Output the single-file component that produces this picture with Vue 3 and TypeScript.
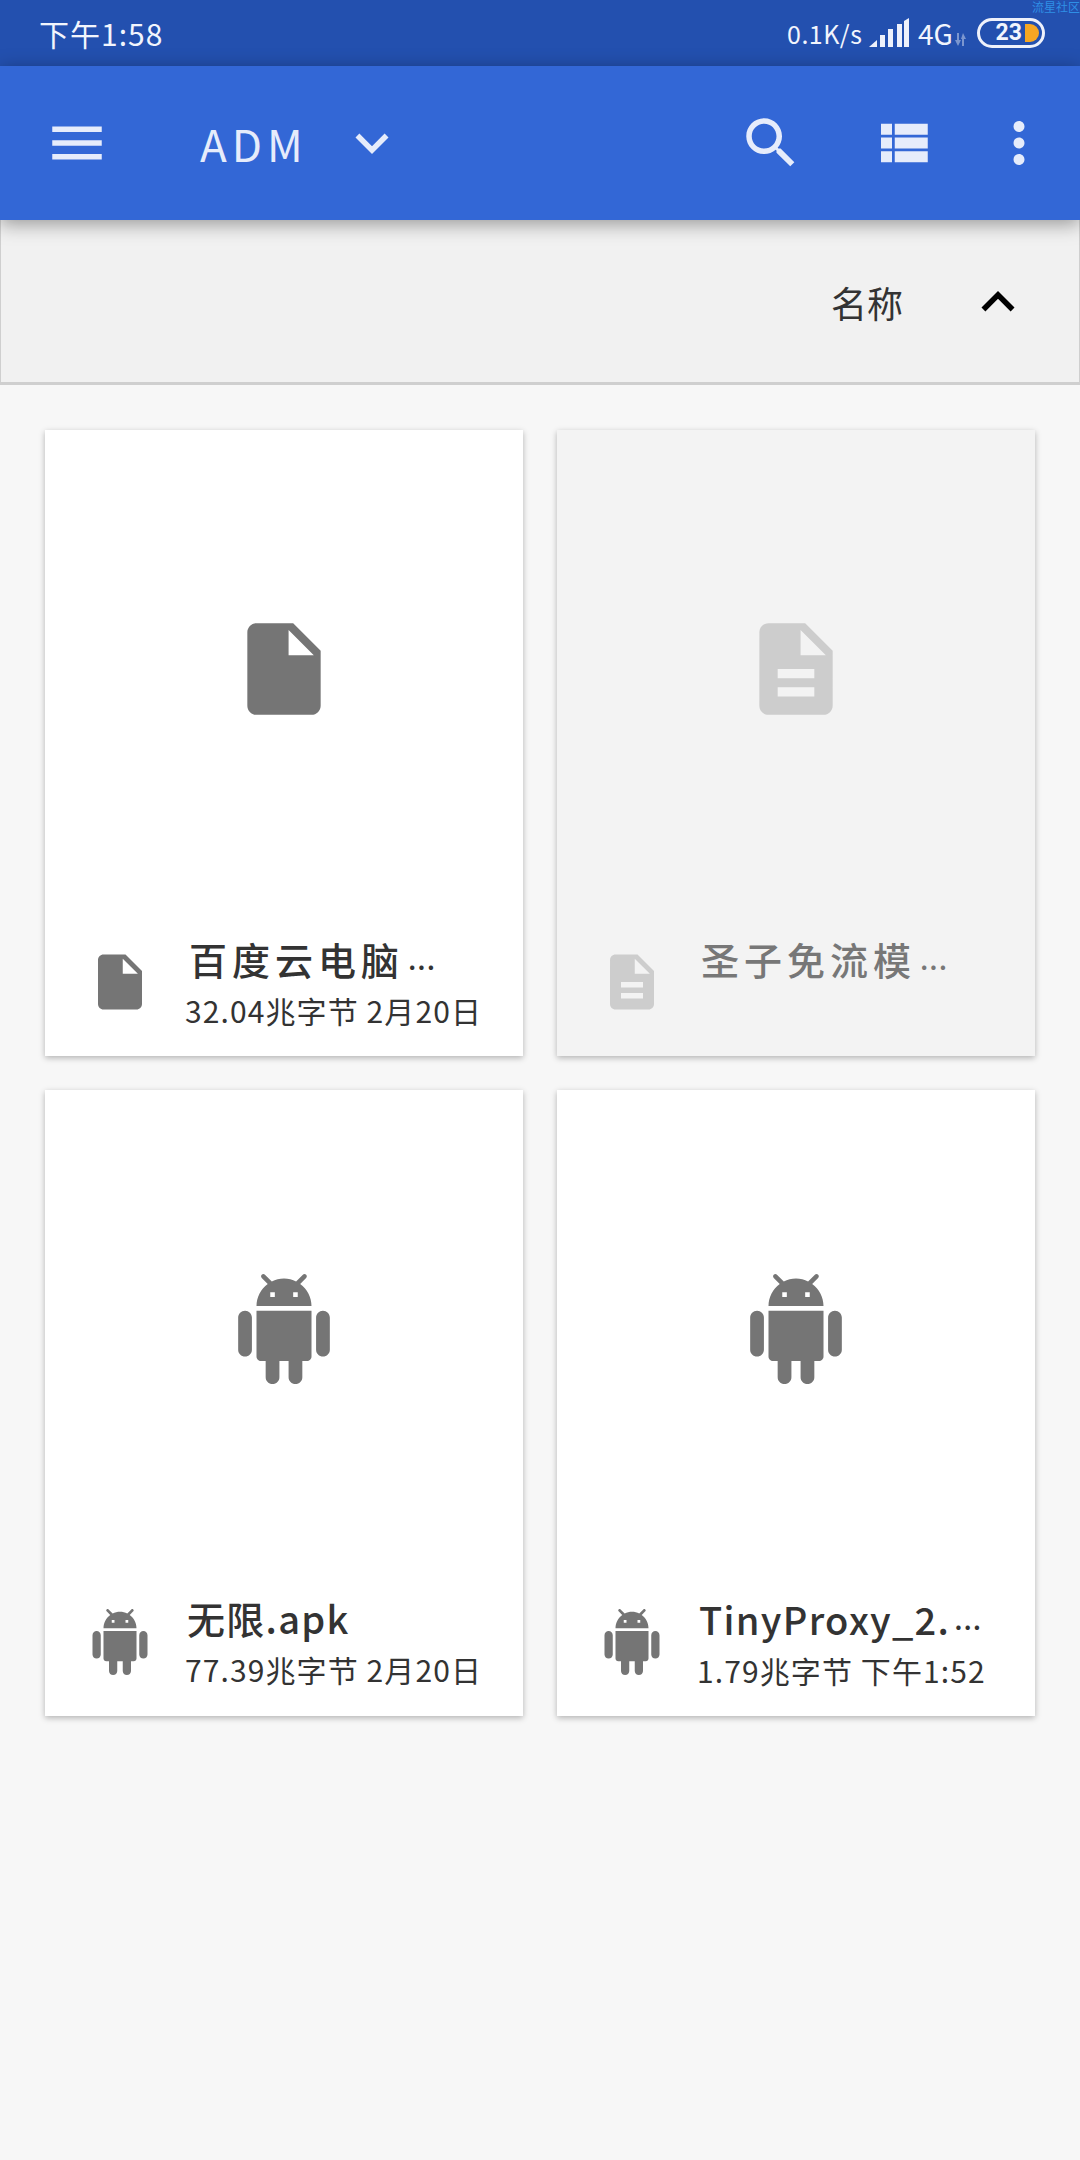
<script setup lang="ts">
type IconName = 'file' | 'doc' | 'android'

interface FileItem {
  name: string
  meta?: string
  icon: IconName
  faded?: boolean
  cut?: boolean
  latin?: boolean
}

const icons: Record<IconName, string> = {
  file: 'M14 2H6c-1.1 0-2 .9-2 2v16c0 1.1.9 2 2 2h12c1.1 0 2-.9 2-2V8l-6-6zm-1 7V3.5L18.5 9H13z',
  doc: 'M14 2H6c-1.1 0-1.99.9-1.99 2L4 20c0 1.1.89 2 1.99 2H18c1.1 0 2-.9 2-2V8l-6-6zm2 16H8v-2h8v2zm0-4H8v-2h8v2zm-3-5V3.5L18.5 9H13z',
  android:
    'M6 18c0 .55.45 1 1 1h1v3.5c0 .83.67 1.5 1.5 1.5s1.5-.67 1.5-1.5V19h2v3.5c0 .83.67 1.5 1.5 1.5s1.5-.67 1.5-1.5V19h1c.55 0 1-.45 1-1V8H6v10zM3.5 8C2.67 8 2 8.67 2 9.5v7c0 .83.67 1.5 1.5 1.5S5 17.33 5 16.5v-7C5 8.67 4.33 8 3.5 8zm17 0c-.83 0-1.5.67-1.5 1.5v7c0 .83.67 1.5 1.5 1.5s1.5-.67 1.5-1.5v-7c0-.83-.67-1.5-1.5-1.5zm-4.97-5.84l1.3-1.3c.2-.2.2-.51 0-.71-.2-.2-.51-.2-.71 0l-1.48 1.48C13.85 1.23 12.95 1 12 1c-.96 0-1.86.23-2.66.63L7.85.15c-.2-.2-.51-.2-.71 0-.2.2-.2.51 0 .71l1.31 1.31C6.97 3.26 6 5.01 6 7h12c0-1.99-.97-3.75-2.47-4.84zM10 5H9V4h1v1zm5 0h-1V4h1v1z',
}

const files: FileItem[] = [
  { name: '百度云电脑', meta: '32.04兆字节 2月20日', icon: 'file', cut: true },
  { name: '圣子免流模', icon: 'doc', faded: true, cut: true },
  { name: '无限.apk', meta: '77.39兆字节 2月20日', icon: 'android', latin: true },
  { name: 'TinyProxy_2.', meta: '1.79兆字节 下午1:52', icon: 'android', cut: true, latin: true },
]
</script>

<template>
  <div class="page">
    <div class="status-bar">
      <span class="clock">下午1:58</span>
      <span class="watermark">流星社区</span>
      <div class="status-right">
        <span class="speed">0.1K/s</span>
        <svg class="signal" width="40" height="29" viewBox="0 0 40 29">
          <polygon points="0,29 8,22 8,29" />
          <rect x="11" y="17" width="5" height="12" />
          <rect x="19" y="11" width="5" height="18" />
          <rect x="28" y="6" width="5" height="23" />
          <polygon points="35,3 40,0 40,29 35,29" />
        </svg>
        <span class="net">4G</span>
        <svg class="activity" width="13" height="13" viewBox="0 0 13 13">
          <path d="M3 0h2v7h2l-3 6-3-6h2zM8 6h2v7H8z M7 6l2-6 3 6z" />
        </svg>
        <div class="battery">
          <span class="level">23</span>
          <span class="charge"></span>
        </div>
      </div>
    </div>

    <header class="toolbar">
      <svg class="icon menu" viewBox="0 0 24 24"><path d="M3 18h18v-2H3v2zm0-5h18v-2H3v2zm0-7v2h18V6H3z" /></svg>
      <span class="title">ADM</span>
      <svg class="icon" viewBox="0 0 24 24"><path d="M16.59 8.59L12 13.17 7.41 8.59 6 10l6 6 6-6z" /></svg>
      <div class="toolbar-actions">
        <svg class="icon" viewBox="0 0 24 24">
          <path d="M15.5 14h-.79l-.28-.27C15.41 12.59 16 11.11 16 9.5 16 5.91 13.09 3 9.5 3S3 5.91 3 9.5 5.91 16 9.5 16c1.61 0 3.09-.59 4.23-1.57l.27.28v.79l5 4.99L20.49 19l-4.99-5zm-6 0C7.01 14 5 11.99 5 9.5S7.01 5 9.5 5 14 7.01 14 9.5 11.99 14 9.5 14z" />
        </svg>
        <svg class="icon" viewBox="0 0 24 24">
          <path d="M4 14h4v-4H4v4zm0 5h4v-4H4v4zM4 9h4V5H4v4zm5 5h12v-4H9v4zm0 5h12v-4H9v4zM9 5v4h12V5H9z" />
        </svg>
        <svg class="icon" viewBox="0 0 24 24">
          <path d="M12 8c1.1 0 2-.9 2-2s-.9-2-2-2-2 .9-2 2 .9 2 2 2zm0 2c-1.1 0-2 .9-2 2s.9 2 2 2 2-.9 2-2-.9-2-2-2zm0 6c-1.1 0-2 .9-2 2s.9 2 2 2 2-.9 2-2-.9-2-2-2z" />
        </svg>
      </div>
    </header>

    <div class="sort-bar">
      <span class="sort-label">名称</span>
      <svg class="icon sort-arrow" viewBox="0 0 24 24"><path d="M12 8l-6 6 1.41 1.41L12 10.83l4.59 4.58L18 14z" /></svg>
    </div>

    <main class="grid">
      <article v-for="file in files" :key="file.name" class="card" :class="{ faded: file.faded }">
        <div class="preview">
          <svg class="file-icon large" viewBox="0 0 24 24"><path :d="icons[file.icon]" /></svg>
        </div>
        <div class="info">
          <svg class="file-icon small" viewBox="0 0 24 24"><path :d="icons[file.icon]" /></svg>
          <div class="text">
            <div class="name" :class="{ latin: file.latin }">{{ file.name }}<span v-if="file.cut" class="more">...</span></div>
            <div v-if="file.meta" class="meta">{{ file.meta }}</div>
          </div>
        </div>
      </article>
    </main>
  </div>
</template>

<style scoped>
.page {
  min-height: 2160px;
  background: #f7f7f7;
  font-family: "Noto Sans CJK SC", "Noto Sans", sans-serif;
  color: #333;
}

.status-bar {
  position: relative;
  height: 66px;
  background: #2350af;
  display: flex;
  align-items: center;
  justify-content: space-between;
  padding: 0 35px 0 39px;
  box-sizing: border-box;
  color: #f2f5fd;
}

.clock {
  font-size: 30px;
  line-height: 66px;
  letter-spacing: 1px;
}

.watermark {
  position: absolute;
  top: 0;
  right: 0;
  font-size: 12px;
  line-height: 13px;
  color: #2f8fe6;
}

.status-right {
  display: flex;
  align-items: center;
  height: 66px;
}

.speed {
  font-size: 25px;
  letter-spacing: 0.5px;
  width: 82px;
}

.signal {
  fill: #eef1fb;
  margin-top: -1px;
}

.net {
  font-size: 28px;
  margin-left: 9px;
  width: 36px;
}

.activity {
  fill: rgba(255, 255, 255, 0.4);
  margin-top: 13px;
}

.battery {
  width: 68px;
  height: 30px;
  margin-left: 10px;
  border: 3px solid #eef1fb;
  border-radius: 15px;
  box-sizing: border-box;
  display: flex;
  align-items: center;
  justify-content: flex-end;
  padding-right: 3px;
}

.level {
  font-family: Roboto, sans-serif;
  font-size: 23px;
  font-weight: 700;
  line-height: 24px;
  margin-right: 3px;
}

.charge {
  width: 14px;
  height: 18px;
  background: #f6a623;
  border-radius: 0 9px 9px 0;
}

.toolbar {
  position: relative;
  z-index: 2;
  height: 154px;
  background: #3367d6;
  display: flex;
  align-items: center;
  padding: 0 28px 0 44px;
  box-shadow: 0 4px 18px rgba(0, 0, 0, 0.38);
  color: #e6ecfb;
}

.icon {
  width: 66px;
  height: 66px;
  flex: none;
  fill: #e6ecfb;
}

.title {
  font-size: 44px;
  line-height: 62px;
  letter-spacing: 5px;
  margin-left: 90px;
  width: 139px;
}

.toolbar-actions {
  margin-left: auto;
  display: flex;
  gap: 66px;
}

.toolbar-actions .icon:last-child {
  margin-left: -16px;
}

.sort-bar {
  height: 165px;
  background: #f1f1f1;
  border: solid #cfcfcf;
  border-width: 0 1px 3px;
  box-sizing: border-box;
  display: flex;
  align-items: center;
  justify-content: flex-end;
  padding: 2px 48px 0 0;
}

.sort-label {
  font-size: 36px;
  line-height: 50px;
  color: #333;
  margin-right: 62px;
}

.sort-arrow {
  fill: #000;
}

.grid {
  display: grid;
  grid-template-columns: 478px 478px;
  grid-auto-rows: 626px;
  gap: 34px;
  padding: 45px 45px 0;
}

.card {
  display: flex;
  flex-direction: column;
  background: #fff;
  box-shadow: 0 2px 6px rgba(0, 0, 0, 0.28);
}

.card.faded {
  background: #f3f3f3;
}

.preview {
  height: 478px;
  display: flex;
  align-items: center;
  justify-content: center;
}

.file-icon {
  flex: none;
  fill: #757575;
}

.faded .file-icon {
  fill: #cdcdcd;
}

.file-icon.large {
  width: 110px;
  height: 110px;
}

.file-icon.small {
  width: 66px;
  height: 66px;
  margin: 41px 32px 0 42px;
}

.info {
  display: flex;
  align-items: flex-start;
}

.text {
  margin-top: 25px;
  white-space: nowrap;
}

.name {
  font-size: 38px;
  line-height: 50px;
  font-weight: 500;
  letter-spacing: 5px;
  margin-left: 4px;
  color: #333;
}

.name.latin {
  letter-spacing: 1.3px;
  margin-left: 2px;
}

.faded .name {
  color: #777;
}

.more {
  font-size: 28px;
  letter-spacing: 1px;
  margin-left: 4px;
  vertical-align: 5px;
}

.meta {
  font-size: 30px;
  line-height: 38px;
  letter-spacing: 1.1px;
  margin-top: 7px;
  color: #333;
}
</style>

<style>
html,
body {
  background: #f7f7f7;
}
</style>
